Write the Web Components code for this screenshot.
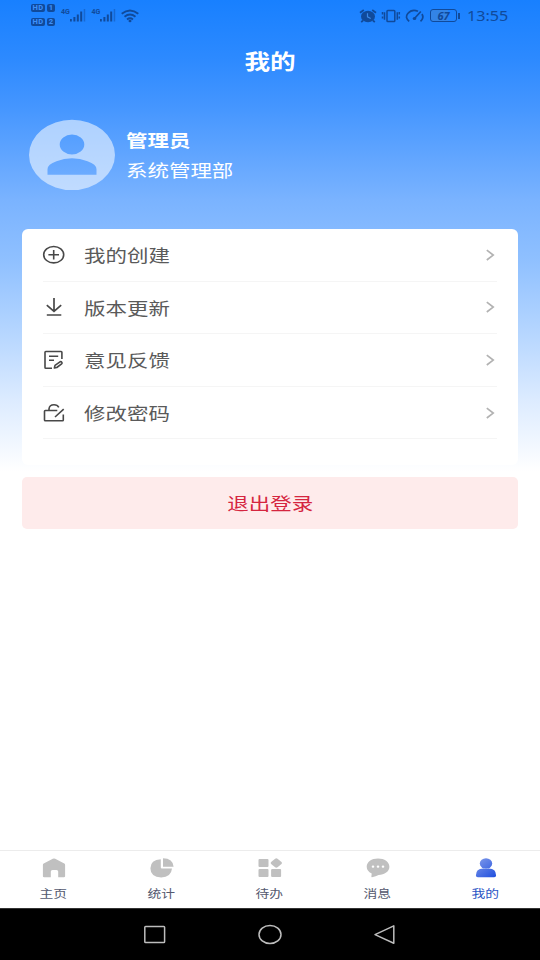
<!DOCTYPE html>
<html lang="zh-CN">
<head>
<meta charset="utf-8">
<title>我的</title>
<style>
html,body{margin:0;height:100%;overflow:hidden}
body{font-family:"Noto Sans CJK SC","Noto Sans",sans-serif;color:#5a5a5a}
</style>
</head>
<body>
<profile-app></profile-app>
<script>
function define(name, html) {
  const t = document.createElement('template');
  t.innerHTML = html;
  customElements.define(name, class extends HTMLElement {
    constructor() {
      super();
      this.attachShadow({mode: 'open'}).appendChild(t.content.cloneNode(true));
    }
  });
}

const ICONS = {
  plus: [22, 18, '<g fill="none" stroke="#484848" stroke-width="1.6"><ellipse cx="10.700" cy="8.700" rx="10" ry="8.200"/><path d="M5.400 8.700h10.600M10.700 3.900v9.600"/></g>'],
  download: [22, 20, '<path d="M11 1v13M3.8 8.2 11 14.3l7.2-6.1M3.8 18h14.5" fill="none" stroke="#484848" stroke-width="1.7"/>'],
  feedback: [22, 20, '<g fill="none" stroke="#484848" stroke-width="1.6" stroke-linejoin="round"><path d="M18.900 9V2.300q0-.8-.8-.8H2.800q-.8 0-.8.8v15.100q0 .8.8.8H9M6 6.300h9.200M6 10.300h5"/><path d="m12 15.400 5-3.600q1.200-.4 1.900.6.500.7-.3 1.400l-4.800 3.700-2.400.5z"/></g>'],
  lock: [22, 20, '<g fill="none" stroke="#484848" stroke-width="1.6" stroke-linejoin="round"><path d="M14.300 7.500H2.300q-.8 0-.8.7v8.700q0 .8.8.8h17.200q.8 0 .8-.8V11.500M6 7.200V5.800Q6.500 1.800 11 1.800q3.500 0 4.800 2.500M12 14l8.700-7.800"/></g>'],
  chevron: [10, 12, '<path d="m.8 1.200 6.400 4.900-6.400 4.900" fill="none" stroke="#b2b2b2" stroke-width="1.7"/>'],
  avatar: [86, 72, '<path fill="#fff" fill-opacity=".55" fill-rule="evenodd" d="M43 .7A43 35.2 0 0 1 43 71.1 43 35.2 0 0 1 43 .7ZM43 15.500A12.300 10 0 0 0 43 35.500 12.300 10 0 0 0 43 15.500ZM18.500 55.700h49v-5.500q0-5-9-8Q51 39.300 43 39.300T27.500 42.200q-9 3-9 8Z"/>'],
  home: [24, 20, '<path fill="#c0c0c0" d="M.9 6.7q0-.7.8-1.2L10.800.7q1.200-.6 2.400 0l9.100 4.800q.8.5.8 1.200v11.500q0 1.100-1.200 1.100h-5.700V13.500q0-1.500-1.700-1.500h-4q-1.700 0-1.700 1.500v5.800H2.100q-1.200 0-1.200-1.100z"/>'],
  pie: [24, 20, '<path fill="#c0c0c0" d="M10.800 1.2v8.4q0 1 1.200 1h10q-.8 8.800-10.800 8.800Q.4 18.800.4 10.200.5 1.600 10.800 1.200ZM13 .3q10 .2 10.600 8.500H13Z"/>'],
  grid: [24, 20, '<g fill="#c0c0c0"><rect x=".5" y="1" width="10" height="8.100" rx="1"/><rect x=".5" y="11" width="10" height="8.100" rx="1"/><rect x="13.100" y="11" width="10" height="8.100" rx="1"/><path d="M17.100.7q1.200-.9 2.400 0l4 3.400q1 .9 0 1.800l-4 3.400q-1.200.9-2.400 0l-4-3.400q-1-.9 0-1.800z"/></g>'],
  chat: [24, 20, '<path fill="#c0c0c0" d="M12 .5C18.500.5 23.400 4 23.400 8.700S18.500 16.800 12.600 17Q10 18.200 6 19.200q-.8.100-.6-.7l.3-3.100Q.7 13 .7 8.700C.7 4 5.500.5 12 .5Z"/><g fill="#fff"><ellipse cx="7" cy="8.700" rx="1.300" ry="1.100"/><ellipse cx="12" cy="8.700" rx="1.300" ry="1.100"/><ellipse cx="17" cy="8.700" rx="1.300" ry="1.100"/></g>'],
  user: [24, 20, '<defs><linearGradient id="u" gradientUnits="userSpaceOnUse" x1="3" y1="0" x2="18" y2="20"><stop stop-color="#809aea"/><stop offset="1" stop-color="#2654df"/></linearGradient></defs><g fill="url(#u)"><ellipse cx="12" cy="5.500" rx="6.200" ry="5.200"/><path d="M1.900 17.500q0-7 7.300-7 2.800 1.200 5.600 0 7.300 0 7.300 7 0 1.800-1.900 1.800H3.800q-1.900 0-1.900-1.800Z"/></g>'],
  square: [24, 20, '<rect x="1.800" y="1.500" width="19.800" height="16" rx=".8" fill="none" stroke="#bdbdbd" stroke-width="1.500"/>'],
  circle: [24, 20, '<ellipse cx="12" cy="9.500" rx="11" ry="9.100" fill="none" stroke="#bdbdbd" stroke-width="1.500"/>'],
  back: [24, 20, '<path d="M20.800.9v17.400L2 9.600Z" fill="none" stroke="#bdbdbd" stroke-width="1.500" stroke-linejoin="round"/>'],
  signal: [16, 13, '<g fill="#104a9b"><rect x="0" y="10" width="1.800" height="2.500"/><rect x="3.400" y="8" width="2" height="4.500"/><rect x="6.800" y="5.500" width="2" height="7"/><rect x="10.200" y="2.500" width="2" height="10"/><rect x="13.700" y="0" width="1.500" height="12.500" opacity=".45"/></g>'],
  wifi: [20, 14, '<g fill="none" stroke="#104a9b" stroke-width="1.900"><path d="M-.8 4.800q8.300-6.600 16.600 0M2 7.800q5.500-4.400 11 0M4.500 10.500q3-2.300 6 0" transform="translate(.5)"/></g><ellipse cx="8" cy="12" rx="1.500" ry="1.200" fill="#104a9b"/>'],
  alarm: [18, 14, '<g stroke="#104a9b" stroke-width="1.800" fill="none"><path d="M1 3.800 4.800 1M17 3.800 13.200 1M4 11.500l-1.800 1.600M14 11.500l1.800 1.600"/></g><ellipse cx="9" cy="7.500" rx="7" ry="5.800" fill="#104a9b"/><path d="M8.500 4.200v3.600l3.200 1.700" fill="none" stroke="#3a88e8" stroke-width="1.200"/>'],
  vibrate: [20, 14, '<g fill="none" stroke="#104a9b" stroke-width="1.500"><rect x="6" y="1.500" width="7.800" height="11" rx=".8"/><path d="M3.500 3.300v7.400M16.300 3.300v7.400M1.500 3v2.500M1.500 7.500v2M18.300 3v2.500M18.300 7.500v2"/></g>'],
  gauge: [20, 14, '<path d="M4.200 12.300Q-.5 8.500 2.800 4.500 7-.3 13 2.300M17 5q2.300 4-1.500 7.300M9.500 9.500l6.300-7" fill="none" stroke="#104a9b" stroke-width="1.700"/><ellipse cx="9.500" cy="9.500" rx="1.800" ry="1.500" fill="#104a9b"/>']
};
customElements.define('ui-icon', class extends HTMLElement {
  connectedCallback() {
    const [w, h, body] = ICONS[this.getAttribute('name')];
    this.attachShadow({mode: 'open'}).innerHTML =
      `<style>:host{display:block;flex:none;width:${w}px;height:${h}px}svg{display:block;overflow:visible}</style>
       <svg width="${w}" height="${h}" viewBox="0 0 ${w} ${h}">${body}</svg>`;
  }
});

/* Text widened horizontally while its line box keeps the font height. */
define('wide-text', `<style>:host{display:block;white-space:nowrap;line-height:1}
span{display:inline-block;transform:scaleX(var(--stretch,1.22));transform-origin:var(--origin,left) center}</style><span><slot></slot></span>`);

define('status-bar', `<style>
:host{display:flex;height:32px;box-sizing:border-box;padding:0 31px;justify-content:space-between;color:#104a9b;font-family:"Noto Sans",sans-serif}
.l,.r{display:flex;align-items:flex-start}
.hd{display:grid;gap:6px;padding-top:4px;width:30px}
.hd div{display:flex;gap:2px;height:8px}
.hd b{display:block;font:800 7.500px/8px Roboto,sans-serif;text-align:center;border-radius:2px;height:8px;color:#3d90fa;background:#104a9b;width:14px;letter-spacing:.5px}
.hd b+b{width:8px;letter-spacing:0}
.g{font:700 7px/8px Roboto,sans-serif;padding-top:8px;width:8.500px}
.sig{padding:9px 6px 0 0}.wifi{padding-top:9px}
.r{padding-top:9px;gap:4px}
.bat{display:flex;align-items:center;gap:1px;margin-left:1px}
.bat b{box-sizing:border-box;width:27px;height:13px;border:1.500px solid #104a9b;border-radius:3px;font:italic 700 11px/11px "Noto Sans",sans-serif;text-align:center;background:linear-gradient(90deg,#3384e6 0 66%,transparent 0)}
.bat i{width:2px;height:6px;background:#104a9b}
wide-text{font-size:13.600px;line-height:13px;width:42px;margin-left:3px;--stretch:1.190}
</style>
<div class="l"><div class="hd"><div><b>HD</b><b>1</b></div><div><b>HD</b><b>2</b></div></div>
<span class="g">4G</span><ui-icon class="sig" name="signal"></ui-icon>
<span class="g">4G</span><ui-icon class="sig" name="signal"></ui-icon><ui-icon class="wifi" name="wifi"></ui-icon></div>
<div class="r"><ui-icon name="alarm"></ui-icon><ui-icon name="vibrate"></ui-icon><ui-icon name="gauge"></ui-icon><div class="bat"><b>67</b><i></i></div><wide-text>13:55</wide-text></div>`);

define('page-title', `<style>:host{display:flex;height:56px;margin-bottom:4px;align-items:center;justify-content:center;color:#fff;font-weight:700;font-size:21px;--origin:center}</style><wide-text><slot></slot></wide-text>`);

define('user-card', `<style>:host{display:flex;height:72px;margin:27px 0 0 29px;gap:11px;color:#fff}
.t{padding-top:12px;display:grid;align-content:start;gap:12px;font-size:17.600px}
.n{font-weight:700}</style>
<ui-icon name="avatar"></ui-icon><div class="t"><wide-text class="n"><slot name="name"></slot></wide-text><wide-text><slot name="dept"></slot></wide-text></div>`);

define('menu-list', `<style>:host{display:block;box-sizing:border-box;height:236px;margin:38px 22px 0;padding:0 21px;background:#fff;border-radius:6px}</style><slot></slot>`);

customElements.define('menu-row', class extends HTMLElement {
  connectedCallback() {
    this.attachShadow({mode: 'open'}).innerHTML = `<style>
    :host{display:flex;align-items:center;height:52.600px;box-sizing:border-box;border-bottom:1px solid #f5f5f5;font-size:17.600px}
    wide-text{margin-left:19px;flex:1}.c{margin-right:1px}</style>
    <ui-icon name="${this.getAttribute('icon')}"></ui-icon><wide-text><slot></slot></wide-text><ui-icon class="c" name="chevron"></ui-icon>`;
  }
});

define('logout-button', `<style>:host{display:flex;align-items:center;justify-content:center;height:52px;margin:12px 22px 0;background:#feebeb;border-radius:5px;color:#d5253f;font-size:17.600px;--origin:center}</style><wide-text><slot></slot></wide-text>`);

define('tab-bar', `<style>:host{display:grid;grid-template-columns:repeat(5,108px);height:58px;box-sizing:border-box;border-top:1px solid #ececec;background:#fff}</style><slot></slot>`);

customElements.define('tab-item', class extends HTMLElement {
  connectedCallback() {
    this.attachShadow({mode: 'open'}).innerHTML = `<style>
    :host{display:flex;flex-direction:column;align-items:center;padding:7px 1px 0 0;gap:10px;font-size:11.300px;color:#555a70;--origin:center}
    :host([active]){color:#2b54c4}</style>
    <ui-icon name="${this.getAttribute('icon')}"></ui-icon><wide-text><slot></slot></wide-text>`;
  }
});

define('nav-bar', `<style>:host{display:flex;justify-content:center;align-items:center;gap:91px;height:52px;background:#000;box-sizing:border-box;border-top:1px solid #333}</style>
<ui-icon name="square"></ui-icon><ui-icon name="circle"></ui-icon><ui-icon name="back"></ui-icon>`);

define('profile-app', `<style>:host{display:flex;flex-direction:column;width:540px;height:960px;
background:linear-gradient(#1880ff 0,#2d8aff 60px,#4395ff 104px,#7ab3ff 200px,#8fc0ff 260px,#b4d5ff 330px,#dcebff 400px,#fff 472px)}
main{flex:1}</style>
<status-bar></status-bar>
<page-title>我的</page-title>
<main>
<user-card><span slot="name">管理员</span><span slot="dept">系统管理部</span></user-card>
<menu-list><menu-row icon="plus">我的创建</menu-row><menu-row icon="download">版本更新</menu-row><menu-row icon="feedback">意见反馈</menu-row><menu-row icon="lock">修改密码</menu-row></menu-list>
<logout-button>退出登录</logout-button>
</main>
<tab-bar><tab-item icon="home">主页</tab-item><tab-item icon="pie">统计</tab-item><tab-item icon="grid">待办</tab-item><tab-item icon="chat">消息</tab-item><tab-item icon="user" active>我的</tab-item></tab-bar>
<nav-bar></nav-bar>`);
</script>
</body>
</html>
